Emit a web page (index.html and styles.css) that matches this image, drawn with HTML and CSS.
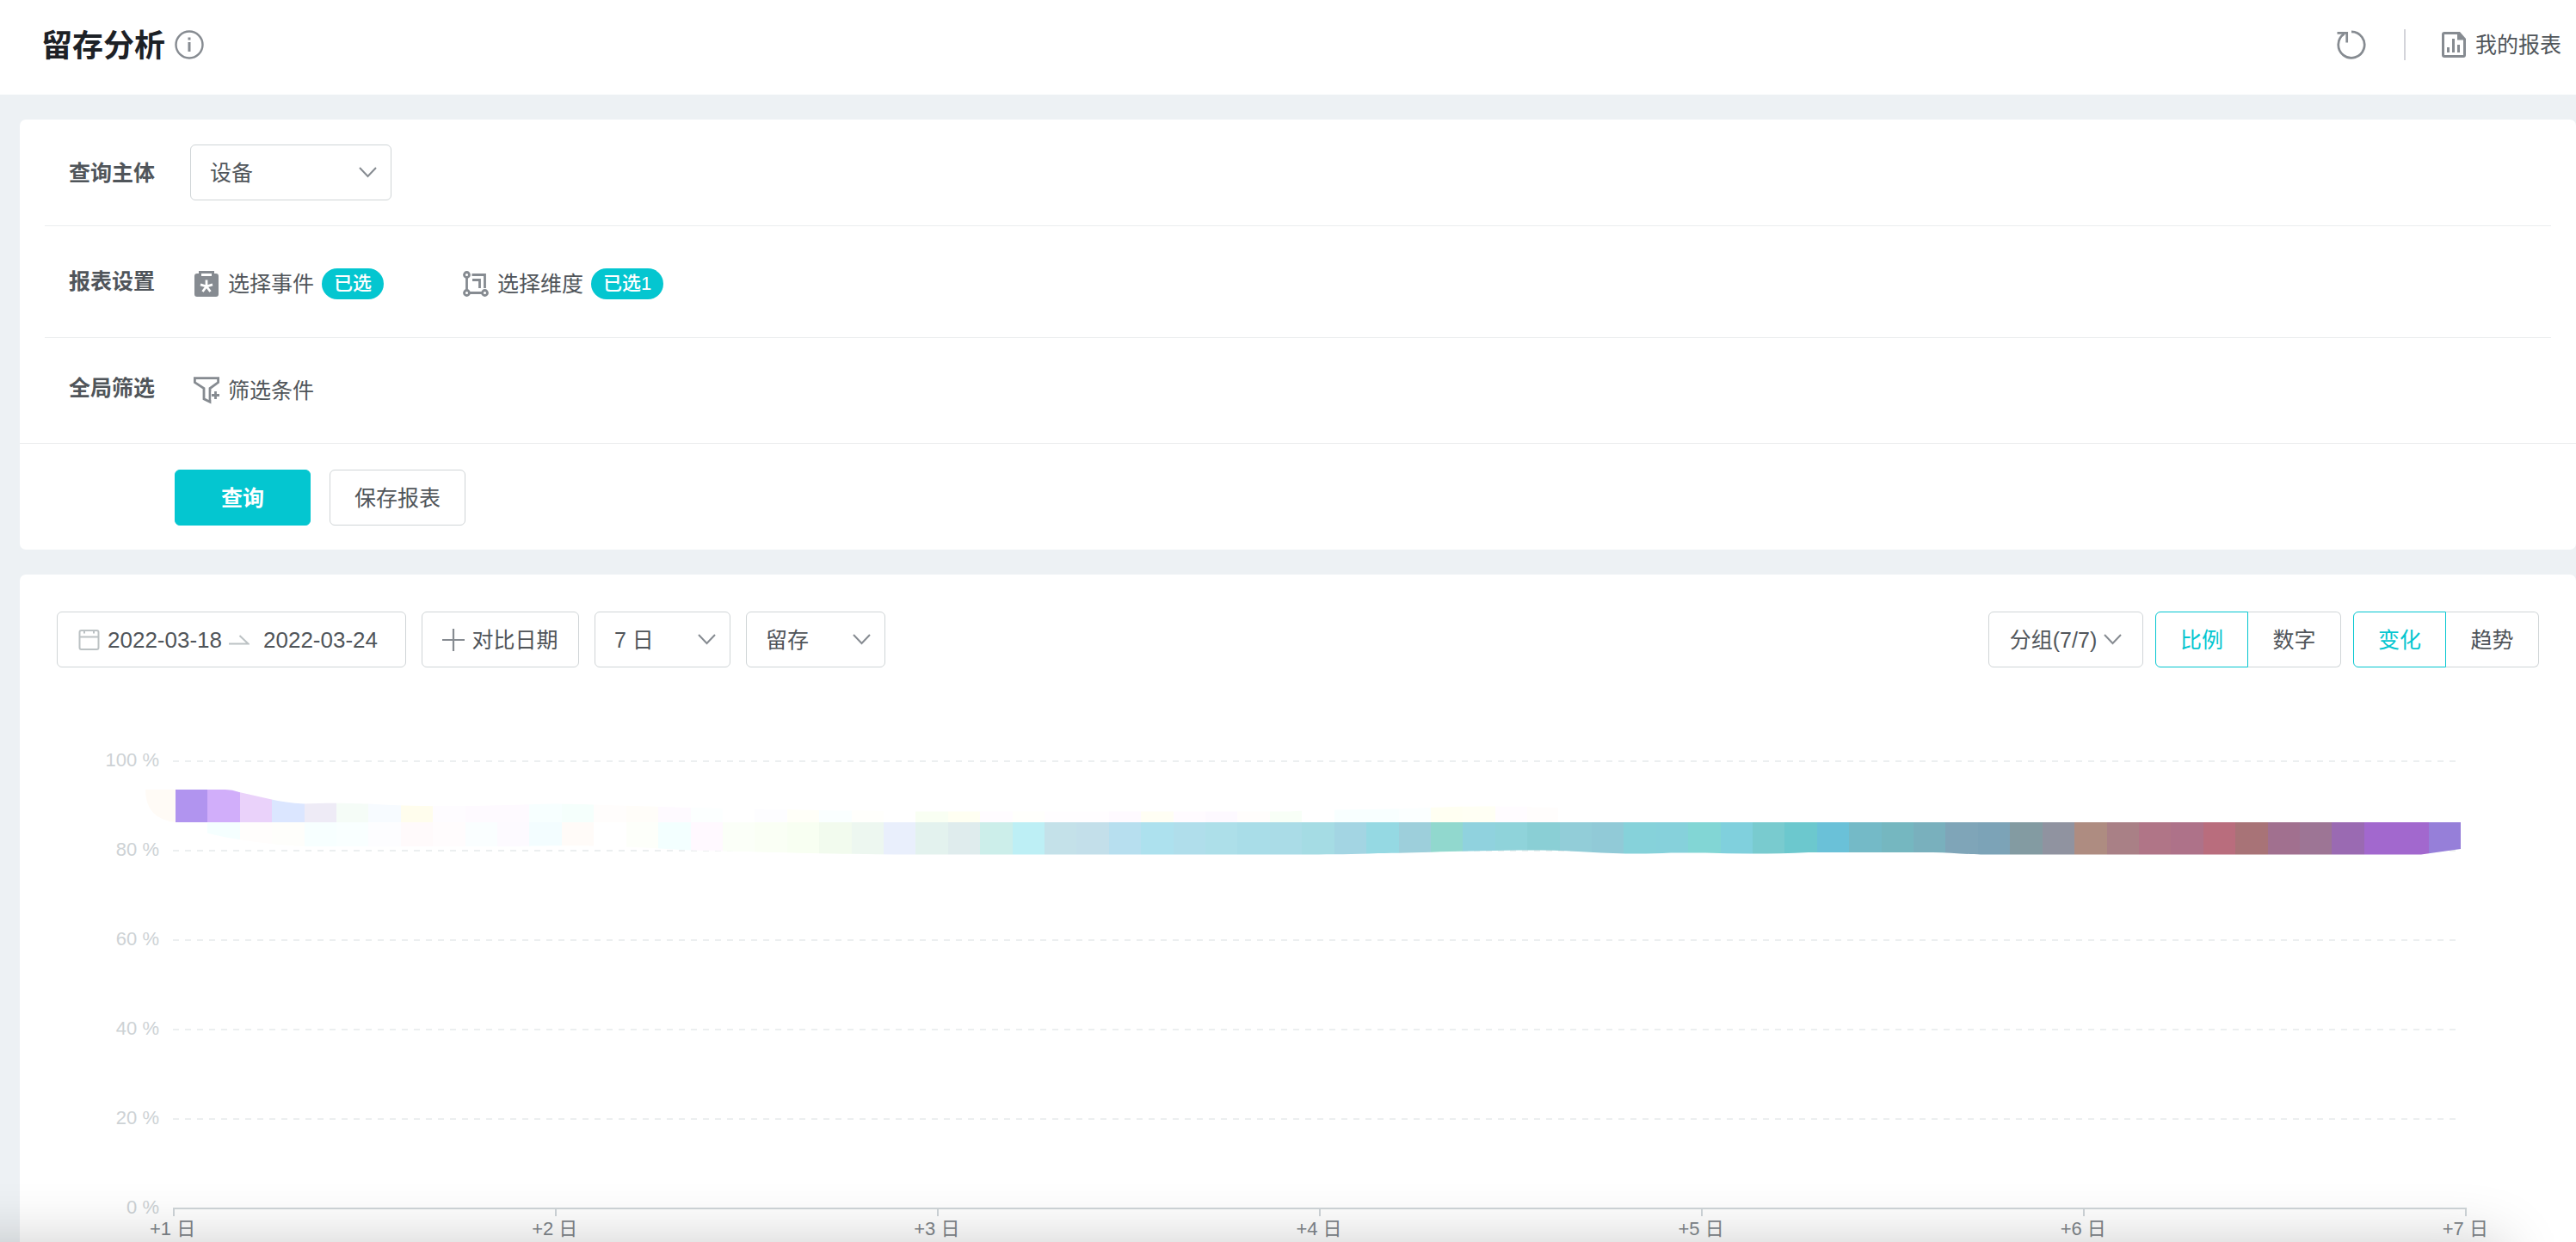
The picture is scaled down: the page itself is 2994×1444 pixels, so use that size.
FILE: index.html
```html
<!DOCTYPE html>
<html lang="zh-CN">
<head>
<meta charset="utf-8">
<meta name="viewport" content="width=device-width, initial-scale=1">
<title>留存分析</title>
<link rel="stylesheet" href="styles.css">
</head>
<body>
<header class="topbar">
  <div class="topbar-title">
    <h1>留存分析</h1>
    <button class="icon-button" type="button" aria-label="说明">
      <svg width="34" height="34" viewBox="0 0 34 34" fill="none" stroke="currentColor"><circle cx="17" cy="17" r="15.5" stroke-width="2.4"/><path d="M17 14v11" stroke-width="3"/><path d="M17 8.5v3" stroke-width="3"/></svg>
    </button>
  </div>
  <div class="topbar-tools">
    <button class="icon-button" type="button" aria-label="刷新">
      <svg width="34" height="34" viewBox="0 0 34 34" fill="none" stroke="currentColor" stroke-width="2.7"><path d="M17 1.9A15.2 15.2 0 1 1 8.600 4.400"/><path d="M.5 3.300H11.700V14.500"/></svg>
    </button>
    <span class="topbar-rule"></span>
    <a class="report-link" href="#reports">
      <svg width="28" height="30" viewBox="0 0 28 30" fill="currentColor"><path fill-rule="evenodd" d="M3 0h18l7 8v19a3 3 0 0 1-3 3H3a3 3 0 0 1-3-3V3a3 3 0 0 1 3-3zm0 3v24h22V9.500h-7V3z"/><path d="M6 18h3v6H6zM12 8h3v16h-3zM18 15h3v9h-3z"/></svg>
      <span>我的报表</span>
    </a>
  </div>
</header>

<main class="content">
  <form class="card query">
    <div class="row">
      <label class="row-label" for="subject">查询主体</label>
      <div class="select subject">
        <select id="subject"><option>设备</option></select>
        <svg class="chevron" width="21" height="13" viewBox="0 0 21 13"><path d="M1 1l9.500 10L20 1"/></svg>
      </div>
    </div>
    <div class="row row-settings">
      <span class="row-label">报表设置</span>
      <div class="row-items">
        <button class="item" type="button">
          <span class="item-icon"><svg width="28" height="30" viewBox="0 0 28 30"><path fill="currentColor" fill-rule="evenodd" d="M5 0h18v3h2a3 3 0 0 1 3 3v21a3 3 0 0 1-3 3H3a3 3 0 0 1-3-3V6a3 3 0 0 1 3-3h2zm3 3v3h12V3z"/><path fill="none" stroke="#fff" stroke-width="2.800" d="M14 10.500V18M7 15.800l7 2.200 7-2.200M14 18l-4.500 6M14 18l4.500 6"/></svg></span>
          <span>选择事件</span><span class="badge">已选</span>
        </button>
        <button class="item" type="button">
          <span class="item-icon"><svg width="30" height="30" viewBox="0 0 30 30" fill="none" stroke="currentColor" stroke-width="2.800"><circle cx="4.500" cy="4.500" r="3"/><circle cx="4.500" cy="25.500" r="3"/><circle cx="25.500" cy="25.500" r="3"/><path d="M4.500 7.500v15M7.500 25.500h15M10.500 4.500h15V20M11 10.500h8.500V20"/></svg></span>
          <span>选择维度</span><span class="badge">已选1</span>
        </button>
      </div>
    </div>
    <div class="row">
      <span class="row-label row-label-raised">全局筛选</span>
      <div class="row-items">
        <button class="item" type="button">
          <span class="item-icon"><svg width="30" height="32" viewBox="0 0 30 32" fill="none" stroke="currentColor" stroke-width="2.800"><path d="M1.400 1.600h27.200v5L19 13.500v15.800l-7-3.500V13.500L1.400 6.600z"/><path stroke="#fff" stroke-width="5" d="M23 17v10"/><path d="M21 21.500h9M25.500 17v9"/></svg></span>
          <span>筛选条件</span>
        </button>
      </div>
    </div>
    <div class="actions">
      <button class="btn btn-primary" type="button">查询</button>
      <button class="btn" type="button">保存报表</button>
    </div>
  </form>

  <section class="card result">
    <div class="toolbar">
      <div class="toolbar-group">
        <div class="date-range">
          <svg width="26" height="26" viewBox="0 0 26 26" fill="none" stroke="#bcc2c4" stroke-width="2"><rect x="1.500" y="2" width="22" height="22" rx="2"/><path d="M1.500 9.500h22M7 1v4.500M18 1v4.500"/></svg>
          <input type="text" aria-label="开始日期" value="2022-03-18">
          <svg class="range-arrow" width="24" height="12" viewBox="0 0 24 12" fill="none" stroke="#bcc2c4" stroke-width="2"><path d="M0 10.500h22.500L12.500 1"/></svg>
          <input type="text" aria-label="结束日期" value="2022-03-24">
        </div>
        <button class="btn compare" type="button">
          <svg width="26" height="26" viewBox="0 0 26 26" fill="none" stroke="#868b91" stroke-width="2.200"><path d="M0 13h26M13 0v26"/></svg>
          <span>对比日期</span>
        </button>
        <div class="select days">
          <select aria-label="周期"><option>7 日</option></select>
          <svg class="chevron" width="21" height="13" viewBox="0 0 21 13"><path d="M1 1l9.500 10L20 1"/></svg>
        </div>
        <div class="select kind">
          <select aria-label="类型"><option>留存</option></select>
          <svg class="chevron" width="21" height="13" viewBox="0 0 21 13"><path d="M1 1l9.500 10L20 1"/></svg>
        </div>
      </div>
      <div class="toolbar-group toolbar-views">
        <button class="btn grouping" type="button">
          <span>分组(7/7)</span>
          <svg class="chevron" width="21" height="13" viewBox="0 0 21 13"><path d="M1 1l9.500 10L20 1"/></svg>
        </button>
        <div class="toggle" role="group" aria-label="数值形式">
          <button type="button" aria-pressed="true">比例</button><button type="button" aria-pressed="false">数字</button>
        </div>
        <div class="toggle" role="group" aria-label="图表形式">
          <button type="button" aria-pressed="true">变化</button><button type="button" aria-pressed="false">趋势</button>
        </div>
      </div>
    </div>

    <div class="chart">
      <div class="y-axis"><span>100 %</span><span>80 %</span><span>60 %</span><span>40 %</span><span>20 %</span><span>0 %</span></div>
      <div class="plot">
        <div class="band"></div><div class="band"></div><div class="band"></div><div class="band"></div><div class="band"></div>
        <svg class="area" id="area" viewBox="-1 0 2664 110" preserveAspectRatio="none" aria-label="留存率">
          <defs><clipPath id="shape"><path d="M-33 34H60Q68 34 76 37C100 42 122 49 151 50.500C185 49 205 50 226 50.500C300 55 360 53 440 50.500C500 51 560 55 713 57C760 59 800 58 863 59.500H1298C1340 57 1400 57 1440 56C1500 53 1540 53 1609 55V71.500H2658V103L2612 109.500H2100C2085 109.500 2060 106.500 2040 107H1900C1860 109 1820 109 1780 107.500H1740C1680 111 1640 105 1590 104.500C1500 104.500 1440 108 1400 108C1360 109.500 1330 109.500 1298 109.500H863C780 109.500 700 107 600 104.500C500 98 440 99 400 100H151C120 99 60 91 37 84V72H2Q-33 68-33 34z"/></clipPath></defs>
          <g id="cells" clip-path="url(#shape)" shape-rendering="crispEdges"></g>
        </svg>
      </div>
      <div class="x-axis"><span>+1 日</span><span>+2 日</span><span>+3 日</span><span>+4 日</span><span>+5 日</span><span>+6 日</span><span>+7 日</span></div>
    </div>
  </section>
</main>
<div class="bottom-shade"></div>
<script src="chart.js"></script>
</body>
</html>
```
FILE: chart.js
```js
// Colours of the retention band, one entry per step from left to right.
const upper = `b194ef d1aefa ead2fa dbe6ff eeebf6 f5fcf7 f7fbff fffded fefcff fefaff fefaff f7ffff
f5fffc fffdfc fffdf9 fefaff fcffff ffffff fdfdff fffff8 faffff fffffc ffffff f9fff3 fffff2 fffcff
fffffc fffdff fffdff fefaff fffef4 fffbff fdf9ff fffdfc f8fff7 ffffff f8ffff f8ffff fbffff fffff2
fffff4 fffcff fffdfc`.split(/\s+/);
const lower = `ffffff f5ffff fffdfc fefefb f7ffff f9ffff fdfdff fffafb fffcfd fafeff fdfaff f3fdff
fffbf8 ffffff fdfffa f3ffff fff9ff fbfff8 fafff5 f8fff2 f2fbee edf7f0 e9effc e3f2ee dfeced cceeea
bdeff5 c4e1e9 c3dfea b7dfef ade1ee b0deeb addfe9 a9dde8 aadce7 a5dce4 a3d5e3 95d9e3 9dcfdb 91d8ce
90d2de 8fd3da 8acfd5 92cdd8 91cad7 86d2da 86d1db 82d6d5 80d0dd 79cbcf 6cc8ce 6ac1d8 74bac7 75b7c0
79b0bd 7fa5b8 7ca3b7 839ba2 9093a0 ae8c81 a98086 b07587 ae7289 b96d7d a87377 a1708f 9d7595 9a6ab2
a268ce a268ce 967fd9`.split(/\s+/);

const START = 2;
const STEP = (2658 - START) / lower.length;
const cells = document.getElementById('cells');

function cell(x, y, width, height, color) {
  const rect = document.createElementNS('http://www.w3.org/2000/svg', 'rect');
  rect.setAttribute('x', x);
  rect.setAttribute('y', y);
  rect.setAttribute('width', width);
  rect.setAttribute('height', height);
  rect.setAttribute('fill', color);
  cells.appendChild(rect);
}

cell(-33, 34, 35, 38, '#fffbf6');
upper.forEach((c, i) => cell(START + i * STEP, 30, STEP, 42, '#' + c));
lower.forEach((c, i) => cell(START + i * STEP, 72, STEP, 38, '#' + c));
```
FILE: styles.css
```css
* {
  box-sizing: border-box;
}

body {
  margin: 0;
  height: 100vh;
  overflow: hidden;
  background: #edf1f4;
  color: #50555a;
  font: 25px/36px "Liberation Sans", "Noto Sans CJK SC", sans-serif;
}

button,
input,
select {
  font: inherit;
  color: inherit;
}

button {
  padding: 0;
  border: 0;
  background: none;
  cursor: pointer;
}

svg {
  display: block;
  flex: none;
}

.topbar {
  display: flex;
  align-items: center;
  justify-content: space-between;
  height: 110px;
  padding: 0 17px 6px 48px;
  background: #fff;
}

.topbar-title {
  display: flex;
  align-items: center;
  gap: 11px;
}

h1 {
  margin: 0;
  padding-top: 3px;
  font-size: 36px;
  line-height: 52px;
  font-weight: 700;
  color: #1d2126;
}

.icon-button {
  color: #868b91;
}

.topbar-tools {
  display: flex;
  align-items: center;
}

.topbar-rule {
  width: 2px;
  height: 36px;
  margin: 0 42px 0 44px;
  background: #d3d4da;
}

.report-link {
  display: flex;
  align-items: center;
  gap: 11px;
  color: inherit;
  text-decoration: none;
}

.report-link svg {
  color: #868b91;
}

.content {
  display: grid;
  gap: 29px;
  padding: 29px 0 0 23px;
}

.card {
  border-radius: 7px;
  background: #fff;
}

.row {
  display: flex;
  align-items: center;
  height: 124px;
  margin: 0 29px;
  padding-left: 28px;
  border-bottom: 1px solid #ebedee;
}

.row-settings {
  height: 130px;
  padding-top: 5px;
}

.row:nth-child(3) {
  height: 123px;
  margin: 0;
  padding-left: 57px;
}

.row-label {
  width: 141px;
  font-weight: 700;
}

.row-settings .row-label,
.row-label-raised {
  padding-bottom: 6px;
}

.row-items {
  display: flex;
  gap: 91px;
  padding-left: 3px;
}

.item {
  display: flex;
  align-items: center;
  gap: 9px;
}

.item-icon {
  display: grid;
  place-items: center;
  width: 32px;
  color: #868b91;
}

.badge {
  height: 36px;
  padding: 0 14px;
  border-radius: 18px;
  background: #04c6d0;
  color: #fff;
  font-size: 22px;
  font-weight: 500;
}

.select {
  display: grid;
  align-items: center;
}

.select select,
.select .chevron {
  grid-area: 1 / 1;
}

.select select {
  width: 100%;
  height: 65px;
  padding: 0 22px;
  border: 1px solid #d0d5d7;
  border-radius: 6px;
  background: #fff;
  appearance: none;
}

.select .chevron {
  justify-self: end;
  margin-right: 17px;
  pointer-events: none;
}

.chevron {
  fill: none;
  stroke: #868b91;
  stroke-width: 2;
}

.subject {
  width: 234px;
}

.days {
  width: 158px;
}

.kind {
  width: 162px;
}

.actions {
  display: flex;
  gap: 22px;
  padding: 30px 180px 28px;
}

.btn {
  display: flex;
  align-items: center;
  justify-content: center;
  width: 158px;
  height: 65px;
  border: 1px solid #d0d5d7;
  border-radius: 6px;
}

.btn-primary {
  border-color: #04c6d0;
  background: #04c6d0;
  color: #fff;
  font-weight: 700;
}

.toolbar {
  display: flex;
  justify-content: space-between;
  padding: 43px 43px 0;
}

.toolbar-group {
  display: flex;
  gap: 18px;
}

.toolbar-views {
  gap: 14px;
}

.date-range {
  display: flex;
  align-items: center;
  width: 406px;
  height: 65px;
  padding-left: 24px;
  border: 1px solid #d0d5d7;
  border-radius: 6px;
}

.date-range input {
  width: 134px;
  margin-left: 8px;
  padding: 0;
  border: 0;
  background: none;
  font-size: 26px;
}

.range-arrow {
  margin: 0 8px 0 7px;
}

.compare {
  gap: 8px;
  width: 183px;
}

.grouping {
  gap: 8px;
  width: 180px;
}

.toggle {
  display: flex;
}

.toggle button {
  width: 108px;
  height: 65px;
  border: 1px solid #d0d5d7;
}

.toggle button:first-child {
  border-radius: 6px 0 0 6px;
}

.toggle button:last-child {
  border-left: 0;
  border-radius: 0 6px 6px 0;
}

.toggle button[aria-pressed="true"] {
  border-color: #04c6d0;
  color: #04c6d0;
}

.chart {
  display: grid;
  grid-template-columns: 162px 1fr;
  column-gap: 16px;
  padding: 90px 129px 40px 0;
  font-size: 22px;
}

.y-axis {
  display: grid;
  grid-auto-rows: 104px;
  height: 540px;
  text-align: right;
  color: #cdd2d5;
}

.plot {
  position: relative;
  height: 540px;
  padding-top: 18px;
  border-bottom: 2px solid #cfd5d9;
}

.plot::after {
  content: "";
  position: absolute;
  top: 100%;
  left: 0;
  right: -2px;
  height: 10px;
  background: repeating-linear-gradient(to right, #cfd5d9 0 2px, transparent 2px calc((100% - 2px) / 6));
}

.band {
  height: 104px;
  margin-right: 4px;
  background: repeating-linear-gradient(to right, #eceff0 0 7px, transparent 7px 14px) top / 100% 2px no-repeat;
}

.area {
  position: absolute;
  top: 0;
  left: 0;
  width: 100%;
  height: 128px;
  padding-top: 18px;
  overflow: visible;
}

.x-axis {
  grid-column: 2;
  display: flex;
  justify-content: space-between;
  margin: 5px -27px 0 -27px;
  color: #80868b;
}

.bottom-shade {
  position: fixed;
  top: 100%;
  left: -200px;
  right: 84px;
  height: 100px;
  box-shadow: 0 0 70px rgba(0, 0, 0, .2);
  pointer-events: none;
}
```
